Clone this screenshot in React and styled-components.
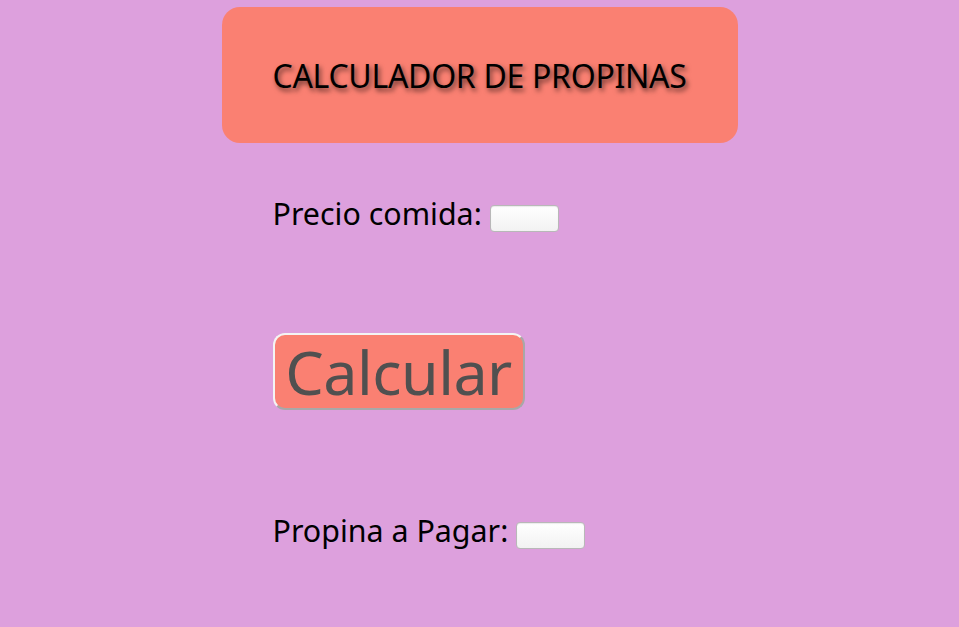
import React from "react";
import styled, { createGlobalStyle } from "styled-components";

const Global = createGlobalStyle`
  html, body {
    margin: 0;
    padding: 0;
    background: #dda0dd;
    font-family: "Noto Sans", "Open Sans", sans-serif;
  }
`;

const Page = styled.div`
  width: 516px;
  margin: 0 auto;
  padding-top: 7px;
`;

const Header = styled.div`
  height: 136px;
  background: #fa8072;
  border-radius: 18px;
  display: flex;
  align-items: center;
  justify-content: center;
  h1 {
    margin: 0;
    font-size: 32px;
    font-weight: 400;
    letter-spacing: -0.3px;
    color: #000;
    text-shadow: 2px 3px 5px rgba(0, 0, 0, 0.6);
  }
`;

const Body = styled.div`
  padding-left: 51px;
  display: flex;
  flex-direction: column;
  align-items: flex-start;
`;

const Row = styled.label`
  display: flex;
  align-items: center;
  gap: 8px;
  font-size: 30.4px;
  line-height: 40px;
  color: #000;
  margin-top: ${(p) => p.$top}px;
`;

const Field = styled.input`
  width: 69px;
  height: 27px;
  box-sizing: border-box;
  margin-top: 8px;
  border: 1px solid #b8b8b8;
  border-radius: 4px;
  background: linear-gradient(#ffffff, #f2f2f2);
  box-shadow: inset 0 1px 1px rgba(0, 0, 0, 0.08);
`;

const Button = styled.button`
  margin-top: 99px;
  width: 252px;
  height: 77px;
  padding: 0;
  font-family: inherit;
  font-size: 61px;
  line-height: 71px;
  color: #505050;
  background: #fa8072;
  border: 2px solid;
  border-color: #f4f4f4 #a8a8a8 #a8a8a8 #f4f4f4;
  border-radius: 12px;
  letter-spacing: -0.5px;
`;

export default function App() {
  return (
    <>
      <Global />
      <Page>
        <Header>
          <h1>CALCULADOR DE PROPINAS</h1>
        </Header>
        <Body>
          <Row $top={51}>
            Precio comida: <Field type="text" />
          </Row>
          <Button>Calcular</Button>
          <Row $top={101}>
            Propina a Pagar: <Field type="text" />
          </Row>
        </Body>
      </Page>
    </>
  );
}
